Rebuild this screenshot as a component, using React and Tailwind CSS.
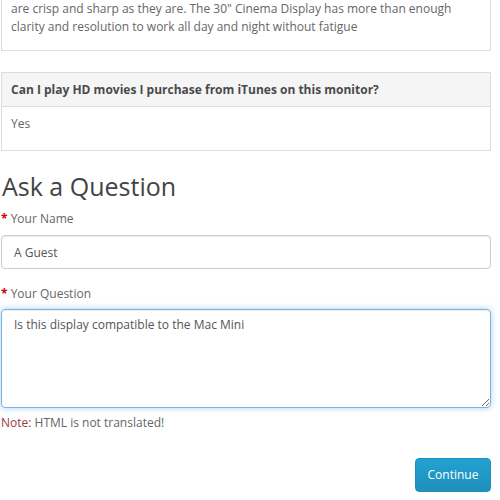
import React, { useEffect, useRef } from 'react';

export default function App() {
    const questionRef = useRef(null);

    useEffect(() => {
        // put the caret at the end of the question, like the screenshot
        const el = questionRef.current;
        if (el) {
            el.focus();
            const len = el.value.length;
            el.setSelectionRange(len, len);
        }
    }, []);

    return (
        <div className="w-[500px] h-[500px] bg-white overflow-hidden font-['Open_Sans',sans-serif] text-[12px] leading-[18px] text-[#666]">
            <div className="ml-px w-[490px]">
                {/* previous answer, cut off at the top */}
                <div className="border-x border-b border-[#ddd] px-[9px] pt-0 pb-[14px]">
                    <p>
                        are crisp and sharp as they are. The 30" Cinema Display has more than enough
                        <br />
                        clarity and resolution to work all day and night without fatigue
                    </p>
                </div>

                <div className="mt-[21px] border border-[#ddd]">
                    <div className="bg-[#f5f5f5] border-b border-[#ddd] px-[9px] py-[8px] leading-[17px] font-bold text-[#4a4a4a]">
                        Can I play HD movies I purchase from iTunes on this monitor?
                    </div>
                    <div className="px-[9px] pt-[8px] pb-[17px]">Yes</div>
                </div>

                <h2 className="mt-[20px] ml-px text-[25px] leading-[30px] text-[#444]">Ask a Question</h2>

                <form className="mt-[9px]" onSubmit={(e) => e.preventDefault()}>
                    <label className="block text-[#666]">
                        <span className="text-[#c00] font-bold">*</span> Your Name
                    </label>
                    <input
                        type="text"
                        defaultValue="A Guest"
                        className="mt-[7px] block w-full h-[34px] px-[12px] border border-[#ccc] rounded-[4px] text-[12px] text-[#555] shadow-[inset_0_1px_1px_rgba(0,0,0,0.075)] outline-none"
                    />

                    <label className="block mt-[16px] text-[#666]">
                        <span className="text-[#c00] font-bold">*</span> Your Question
                    </label>
                    <textarea
                        ref={questionRef}
                        defaultValue="Is this display compatible to the Mac Mini"
                        className="mt-[6px] block w-full h-[99px] px-[12px] py-[6px] border border-[#7eb2dc] rounded-[4px] text-[12px] leading-[18px] text-[#555] shadow-[inset_0_1px_1px_rgba(0,0,0,0.075),0_0_6px_rgba(102,175,233,0.6)] outline-none"
                    />

                    <p className="mt-[6px] text-[#666]">
                        <span className="text-[#9b3b3b]">Note:</span> HTML is not translated!
                    </p>

                    <div className="mt-[26px] flex justify-end">
                        <button
                            type="submit"
                            className="w-[76px] h-[34px] rounded-[4px] border border-[#1f90bb] bg-gradient-to-b from-[#23a1d1] to-[#1f90bb] text-white text-[12px]"
                        >
                            Continue
                        </button>
                    </div>
                </form>
            </div>
        </div>
    );
}
